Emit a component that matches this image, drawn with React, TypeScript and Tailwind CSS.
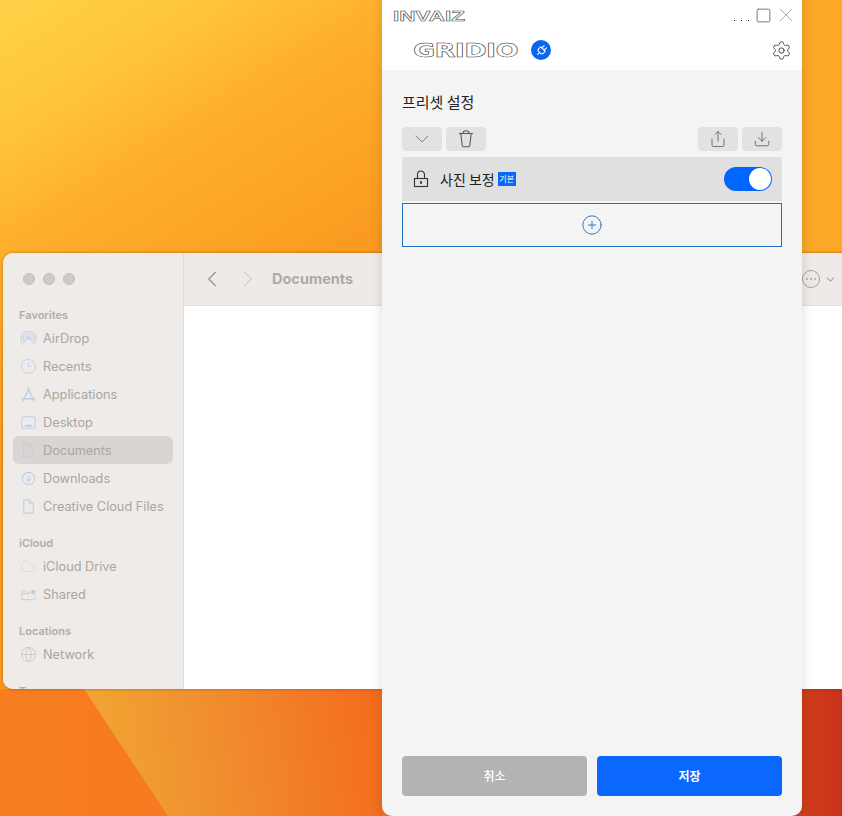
// Desktop capture: blurred Finder window behind the GRIDIO preset settings dialog.

import {
  ChevronDown,
  ChevronLeft,
  ChevronRight,
  CirclePlus,
  Clock3,
  Cloud,
  Download,
  Ellipsis,
  Globe,
  Plug,
  Settings,
  Share,
  Square,
  X,
} from "lucide-react";
import type { ReactNode } from "react";

const iconClass = "h-[17px] w-[17px] text-[#bccfe6]";

function AirDropIcon() {
  return (
    <svg viewBox="0 0 18 18" fill="none" stroke="currentColor" strokeWidth="1.1" className={iconClass}>
      <path d="M4 15.5a8 8 0 1 1 10 0" />
      <path d="M5.5 13.4a5.4 5.4 0 1 1 7 0" />
      <path d="M7 11.3a2.9 2.9 0 1 1 4 0" />
      <circle cx="9" cy="9" r="0.9" fill="currentColor" />
    </svg>
  );
}

function AppsIcon() {
  return (
    <svg viewBox="0 0 18 18" fill="none" stroke="currentColor" strokeWidth="1.4" className={iconClass}>
      <path d="M8 2l5.5 11M10 2L4.5 13M2 13.5h14M3 16l1.5-3M15 16l-1.5-3" />
    </svg>
  );
}

function DesktopIcon() {
  return (
    <svg viewBox="0 0 18 18" fill="none" stroke="currentColor" strokeWidth="1.1" className={iconClass}>
      <rect x="2" y="3" width="14" height="12" rx="1.5" />
      <path d="M5 12.5h8" strokeWidth="2" />
    </svg>
  );
}

function DocIcon() {
  return (
    <svg viewBox="0 0 18 18" fill="none" stroke="currentColor" strokeWidth="1.1" className={iconClass}>
      <path d="M4 2h6l4 4v10H4z" strokeLinejoin="round" />
      <path d="M10 2v4h4" />
    </svg>
  );
}

function DownloadsIcon() {
  return (
    <svg viewBox="0 0 18 18" fill="none" stroke="currentColor" strokeWidth="1.1" className={iconClass}>
      <circle cx="9" cy="9" r="6.5" />
      <path d="M9 5.5v6.5M6.5 9.5L9 12l2.5-2.5" />
    </svg>
  );
}

function SharedIcon() {
  return (
    <svg viewBox="0 0 18 18" fill="none" stroke="currentColor" strokeWidth="1" className={iconClass}>
      <path d="M11 14.5H2V5h4l1.2 1.5H10M2 8h8" />
      <circle cx="14" cy="6.5" r="2" fill="currentColor" />
      <path d="M11.5 14.5H16V10" />
    </svg>
  );
}

function TrashIcon() {
  return (
    <svg viewBox="0 0 20 20" fill="none" stroke="currentColor" strokeWidth="1.1" className="h-5 w-5">
      <path d="M3 4.5h14" />
      <path d="M7 4.5C7 2.5 8 1.8 10 1.8s3 .7 3 2.7" />
      <path d="M4.8 4.5l1.4 12c.1.8.6 1.2 1.3 1.2h5c.7 0 1.2-.4 1.3-1.2l1.4-12" />
    </svg>
  );
}

function PresetLockIcon() {
  return (
    <svg viewBox="0 0 18 20" fill="none" stroke="#333" strokeWidth="1.1" className="h-5 w-[18px]">
      <path d="M5.5 9.5V5.5a3.5 3.5 0 0 1 7 0v4" />
      <rect x="2.5" y="9.5" width="13" height="8" />
      <path d="M9 12v3" strokeWidth="1.6" />
    </svg>
  );
}

function SideRow({ icon, label, active }: { icon: ReactNode; label: string; active?: boolean }) {
  return (
    <div className={`flex h-7 shrink-0 items-center gap-[6px] rounded-md pl-[7px] ${active ? "bg-[#d9d5d2]" : ""}`}>
      <span className="flex w-[17px] justify-center">{icon}</span>
      <span className="pt-[2px] text-[12.75px] leading-none whitespace-nowrap text-[#a9a6a4]">{label}</span>
    </div>
  );
}

function SideHeading({ children, className }: { children: ReactNode; className: string }) {
  return <p className={`shrink-0 pl-[6px] text-[11px] leading-[14px] font-semibold text-[#b0adab] ${className}`}>{children}</p>;
}

function FinderWindow() {
  return (
    <div className="absolute top-[253px] left-[3px] flex h-[436px] w-[860px] overflow-hidden rounded-tl-[10px] rounded-bl-[10px] bg-white font-['Inter',sans-serif] shadow-[0_0_3px_rgba(90,40,0,0.5)]">
      <div className="flex w-[181px] shrink-0 flex-col border-r border-[#e0dcd9] bg-[#efebe8] px-[10px]">
        <div className="flex shrink-0 gap-[8px] pt-[20px] pl-[10px]">
          <span className="h-3 w-3 rounded-full border border-[#c0bdbb] bg-[#cdcac8]" />
          <span className="h-3 w-3 rounded-full border border-[#c0bdbb] bg-[#cdcac8]" />
          <span className="h-3 w-3 rounded-full border border-[#c0bdbb] bg-[#cdcac8]" />
        </div>
        <SideHeading className="mt-[23px] mb-[2px]">Favorites</SideHeading>
        <SideRow icon={<AirDropIcon />} label="AirDrop" />
        <SideRow icon={<Clock3 strokeWidth={1.2} className={iconClass} />} label="Recents" />
        <SideRow icon={<AppsIcon />} label="Applications" />
        <SideRow icon={<DesktopIcon />} label="Desktop" />
        <SideRow icon={<DocIcon />} label="Documents" active />
        <SideRow icon={<DownloadsIcon />} label="Downloads" />
        <SideRow icon={<DocIcon />} label="Creative Cloud Files" />
        <SideHeading className="mt-[16px] mb-[2px]">iCloud</SideHeading>
        <SideRow icon={<Cloud strokeWidth={1.1} className="h-[17px] w-[17px] text-[#cfdbe6]" />} label="iCloud Drive" />
        <SideRow icon={<SharedIcon />} label="Shared" />
        <SideHeading className="mt-[16px] mb-[2px]">Locations</SideHeading>
        <SideRow icon={<Globe strokeWidth={1.1} className="h-[17px] w-[17px] text-[#c4c2c0]" />} label="Network" />
        <SideHeading className="mt-[16px]">Tags</SideHeading>
      </div>
      <div className="flex min-w-0 flex-1 flex-col">
        <div className="flex h-[53px] shrink-0 items-center border-b border-[#e2dfdd] bg-[#eeeae7] pl-[15px]">
          <ChevronLeft strokeWidth={1.5} className="h-[26px] w-[26px] text-[#9f9c9a]" />
          <ChevronRight strokeWidth={1.2} className="ml-[10px] h-[26px] w-[26px] text-[#d3d0ce]" />
          <span className="ml-[11px] text-[14.5px] font-bold text-[#adaaa8]">Documents</span>
          <Ellipsis strokeWidth={1.5} className="ml-[449px] h-[18px] w-[18px] rounded-full border border-[#a6a3a1] p-[1px] text-[#a6a3a1]" />
          <ChevronDown strokeWidth={2} className="ml-[4px] h-[13px] w-[13px] text-[#a6a3a1]" />
        </div>
        <div className="flex-1 bg-white" />
      </div>
    </div>
  );
}

function ToolButton({ children }: { children: ReactNode }) {
  return <button className="flex h-6 w-10 items-center justify-center rounded-[4px] bg-[#e2e2e2] text-[#5c5c5c]">{children}</button>;
}

function PresetDialog() {
  return (
    <div className="absolute top-0 left-[382px] flex h-[816px] w-[420px] flex-col overflow-hidden rounded-b-[10px] bg-[#f4f4f4] font-['Noto_Sans_CJK_KR','Inter',sans-serif] shadow-[0_0_10px_3px_rgba(0,0,0,0.09)]">
      <div className="h-[70px] shrink-0 bg-white">
        <div className="flex h-[30px] items-center pl-[11px]">
          <span className="origin-left scale-x-[1.5] font-['Liberation_Sans',sans-serif] text-[15px] leading-none font-bold text-transparent [-webkit-text-stroke:0.5px_#444]">INVAIZ</span>
          <div className="ml-auto flex items-center">
            <span className="mt-[10px] flex gap-[6px]">
              <span className="h-px w-px bg-black" />
              <span className="h-px w-px bg-black" />
              <span className="h-px w-px bg-black" />
            </span>
            <Square strokeWidth={1.4} className="ml-[6px] h-[17px] w-[17px] text-[#777]" />
            <X strokeWidth={0.8} className="mr-[4px] ml-[2px] h-6 w-6 text-[#999]" />
          </div>
        </div>
        <div className="flex h-[40px] items-center pr-[10px] pl-[31px]">
          <span className="w-[105px] origin-left scale-x-[1.43] font-['DejaVu_Sans',sans-serif] text-[19px] leading-none font-bold tracking-[-0.5px] text-transparent [-webkit-text-stroke:0.5px_#333]">GRIDIO</span>
          <span className="ml-[13px] flex h-5 w-5 items-center justify-center rounded-full bg-[#0a66f0]">
            <Plug strokeWidth={2} className="h-[13px] w-[13px] rotate-45 text-white" />
          </span>
          <Settings strokeWidth={1.1} className="ml-auto h-[21px] w-[21px] text-[#444]" />
        </div>
      </div>

      <div className="flex min-h-0 flex-1 flex-col px-5 pt-[22px] pb-5">
        <h3 className="text-[15px] leading-5 font-normal text-[#222]">프리셋 설정</h3>
        <div className="mt-[15px] flex gap-1">
          <ToolButton>
            <ChevronDown strokeWidth={0.9} className="h-6 w-6 text-[#777]" />
          </ToolButton>
          <ToolButton>
            <TrashIcon />
          </ToolButton>
          <div className="ml-auto flex gap-1">
            <ToolButton>
              <Share strokeWidth={1.1} className="h-[18px] w-[18px]" />
            </ToolButton>
            <ToolButton>
              <Download strokeWidth={1.1} className="h-[18px] w-[18px]" />
            </ToolButton>
          </div>
        </div>

        <div className="mt-[6px] flex h-11 items-center bg-[#e0e0e0] pr-[10px] pl-[10px]">
          <PresetLockIcon />
          <span className="ml-[10px] text-[14px] leading-none text-[#222]">사진 보정</span>
          <span className="ml-[3px] flex h-[14px] w-[18px] items-center justify-center bg-[#0a66f5] text-[8px] leading-none text-white">기본</span>
          <span className="ml-auto flex h-6 w-12 items-center justify-end rounded-full bg-[#0066ff] pr-px">
            <span className="h-[22px] w-[22px] rounded-full bg-white" />
          </span>
        </div>
        <button className="mt-[2px] flex h-11 shrink-0 items-center justify-center border border-[#1f6fc4]">
          <CirclePlus strokeWidth={1} className="h-[22px] w-[22px] text-[#1f6fc4]" />
        </button>

        <div className="mt-auto flex gap-[10px]">
          <button className="h-10 flex-1 rounded-[4px] bg-[#b3b3b3] text-[12px] font-medium text-white">취소</button>
          <button className="h-10 flex-1 rounded-[4px] bg-[#0a68ff] text-[12px] font-bold text-white">저장</button>
        </div>
      </div>
    </div>
  );
}

function Wallpaper() {
  return (
    <svg viewBox="0 0 842 816" preserveAspectRatio="none" className="absolute inset-0 h-full w-full">
      <defs>
        <linearGradient id="sky" gradientUnits="userSpaceOnUse" x1="40" y1="0" x2="240" y2="320">
          <stop offset="0" stopColor="#ffd045" />
          <stop offset="0.25" stopColor="#ffc53a" />
          <stop offset="0.5" stopColor="#feb02c" />
          <stop offset="1" stopColor="#fa9a20" />
        </linearGradient>
        <linearGradient id="low" x1="0" y1="0" x2="1" y2="0">
          <stop offset="0" stopColor="#f77f20" />
          <stop offset="0.6" stopColor="#f4701e" />
          <stop offset="0.85" stopColor="#e0581a" />
          <stop offset="1" stopColor="#c8321a" />
        </linearGradient>
        <linearGradient id="ray" gradientUnits="userSpaceOnUse" x1="110" y1="760" x2="380" y2="720">
          <stop offset="0" stopColor="#f0a232" />
          <stop offset="0.35" stopColor="#f09030" />
          <stop offset="1" stopColor="#f46c1e" />
        </linearGradient>
      </defs>
      <rect width="842" height="816" fill="url(#sky)" />
      <rect x="802" y="0" width="40" height="253" fill="#fba727" />
      <rect y="689" width="842" height="127" fill="url(#low)" />
      <path d="M84 689H382V816H168Z" fill="url(#ray)" />
    </svg>
  );
}

export default function App() {
  return (
    <div className="relative h-[816px] w-[842px] overflow-hidden">
      <Wallpaper />
      <FinderWindow />
      <PresetDialog />
    </div>
  );
}
